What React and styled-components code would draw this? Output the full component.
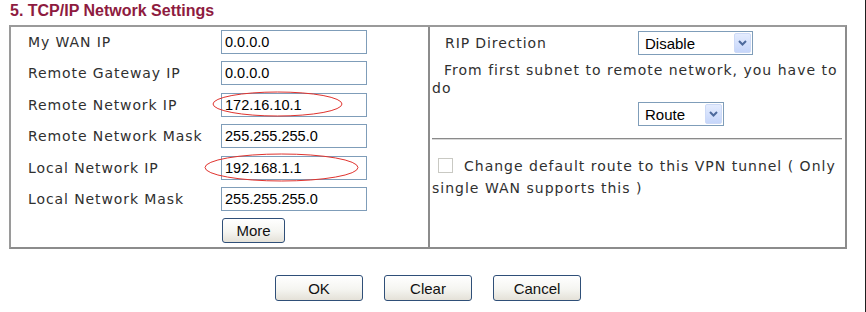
import { Fragment } from 'react';
import styled, { createGlobalStyle } from 'styled-components';

const GlobalStyle = createGlobalStyle`
  html, body {
    margin: 0;
    padding: 0;
    background: #fff;
  }
  body {
    font-family: "DejaVu Sans", Verdana, sans-serif;
  }
`;

const Page = styled.div`
  width: 866px;
  height: 312px;
  box-sizing: border-box;
  padding-left: 9px;
  border-right: 1px solid #1e1e1e;
`;

const Title = styled.h3`
  margin: 0;
  height: 25px;
  box-sizing: border-box;
  padding: 1px 0 0 1px;
  font: 700 16px/20px "Liberation Sans", Arial, sans-serif;
  color: #8e1b40;
`;

const Panel = styled.div`
  width: 838px;
  box-sizing: border-box;
  display: grid;
  grid-template-columns: 419px 1fr;
  border: 2px solid #8c8c8c;
  border-top-color: #9a9a9a;
  border-left-color: #9a9a9a;
`;

const LeftCell = styled.div`
  border-right: 2px solid #8c8c8c;
  padding: 3px 0 4px 17px;
  display: grid;
  grid-template-columns: 193px 146px;
  row-gap: 7.4px;
  align-items: center;
`;

const Label = styled.span`
  font-size: 14px;
  letter-spacing: 0.9px;
  color: #303030;
  white-space: nowrap;
`;

const Field = styled.div`
  position: relative;
  height: 24px;
`;

const TextInput = styled.input`
  width: 146px;
  height: 24px;
  box-sizing: border-box;
  margin: 0;
  padding: 0 3px;
  border: 1px solid #7f9db9;
  font: 14.5px "Liberation Sans", Arial, sans-serif;
  color: #000;
  background: #fff;
  outline: none;
`;

const Mark = styled.svg`
  position: absolute;
  left: ${p => p.$left}px;
  top: ${p => p.$top}px;
  overflow: visible;
  pointer-events: none;
`;

const Button = styled.button`
  width: ${p => p.$w}px;
  height: ${p => p.$h}px;
  margin: 0;
  padding: 0;
  box-sizing: border-box;
  border: 1px solid #2f4f78;
  border-radius: 3px;
  background: linear-gradient(#ffffff, #f5f5f1 55%, #e4e1d8);
  font: 15px "Liberation Sans", Arial, sans-serif;
  color: #111;
`;

const MoreSlot = styled.div`
  grid-column: 2;
  height: 25px;
  padding-left: 1px;
`;

const RightCell = styled.div`
  padding: 4px 5px 0 2px;
  display: flex;
  flex-direction: column;
  font-size: 14px;
  letter-spacing: 1px;
  color: #303030;
`;

const RipRow = styled.div`
  display: flex;
  align-items: center;
`;

const RipLabel = styled.span`
  width: 193px;
  padding-left: 13px;
  white-space: nowrap;
  letter-spacing: 0.9px;
`;

const Note = styled.p`
  margin: 6px 0 0;
  line-height: 18px;
  text-indent: 12px;
`;

const SelectBox = styled.div`
  display: inline-flex;
  align-items: stretch;
  width: ${p => p.$w}px;
  height: 24px;
  box-sizing: border-box;
  border: 1px solid #7f9db9;
  background: #fff;
  padding: 1px;
  margin-left: ${p => p.$indent || 0}px;
  margin-top: ${p => p.$top || 0}px;
`;

const SelectControl = styled.select`
  flex: 1;
  min-width: 0;
  appearance: none;
  border: none;
  background: transparent;
  padding: 0 0 0 5px;
  margin: 0;
  font: 15px "Liberation Sans", Arial, sans-serif;
  color: #000;
  outline: none;
`;

const ArrowButton = styled.span`
  width: 17px;
  display: flex;
  align-items: center;
  justify-content: center;
  border-radius: 2px;
  background: linear-gradient(#e4ecfe, #c6d6fa);
  border: 1px solid #cddaf7;
  box-sizing: border-box;
`;

const Rule = styled.hr`
  margin: 12px 0 0;
  border: none;
  border-top: 1px solid #8a8a8a;
  border-bottom: 1px solid #d8d8d8;
  width: 410px;
`;

const CheckNote = styled.p`
  margin: 15px 0 0;
  line-height: 22px;
`;

const Check = styled.input`
  appearance: none;
  width: 15px;
  height: 15px;
  margin: 0 11px -2px 6px;
  border: 1px solid #c9c9c3;
  background: #fff;
  vertical-align: baseline;
`;

const ButtonBar = styled.div`
  width: 838px;
  display: flex;
  justify-content: center;
  gap: 21px;
  margin-top: 26px;
`;

const Chevron = () => (
  <svg width="9" height="6" viewBox="0 0 9 6">
    <path d="M1 1 L4.5 4.5 L8 1" fill="none" stroke="#4d6a9c" strokeWidth="2" />
  </svg>
);

const Select = ({ width, value, options, indent, top }) => (
  <SelectBox $w={width} $indent={indent} $top={top}>
    <SelectControl defaultValue={value}>
      {options.map(o => (
        <option key={o}>{o}</option>
      ))}
    </SelectControl>
    <ArrowButton>
      <Chevron />
    </ArrowButton>
  </SelectBox>
);

const rows = [
  { label: 'My WAN IP', value: '0.0.0.0' },
  { label: 'Remote Gateway IP', value: '0.0.0.0' },
  { label: 'Remote Network IP', value: '172.16.10.1', mark: { left: -8, top: -1, w: 129, h: 24 } },
  { label: 'Remote Network Mask', value: '255.255.255.0' },
  { label: 'Local Network IP', value: '192.168.1.1', mark: { left: -16, top: -2, w: 153, h: 27 } },
  { label: 'Local Network Mask', value: '255.255.255.0' },
];

const App = () => {
  return (
    <Page>
      <GlobalStyle />
      <Title>5. TCP/IP Network Settings</Title>
      <Panel>
        <LeftCell>
          {rows.map(r => (
            <Fragment key={r.label}>
              <Label>{r.label}</Label>
              <Field>
                <TextInput defaultValue={r.value} />
                {r.mark && (
                  <Mark $left={r.mark.left} $top={r.mark.top} width={r.mark.w} height={r.mark.h}>
                    <ellipse
                      cx={r.mark.w / 2}
                      cy={r.mark.h / 2}
                      rx={r.mark.w / 2}
                      ry={r.mark.h / 2}
                      fill="none"
                      stroke="#e0332e"
                      strokeWidth="1"
                    />
                  </Mark>
                )}
              </Field>
            </Fragment>
          ))}
          <MoreSlot>
            <Button $w={63} $h={25}>More</Button>
          </MoreSlot>
        </LeftCell>
        <RightCell>
          <RipRow>
            <RipLabel>RIP Direction</RipLabel>
            <Select width={115} value="Disable" options={['Disable', 'TX', 'RX', 'Both']} />
          </RipRow>
          <Note>From first subnet to remote network, you have to do</Note>
          <div>
            <Select width={86} value="Route" options={['Route', 'NAT']} indent={206} top={5} />
          </div>
          <Rule />
          <CheckNote>
            <Check type="checkbox" disabled />
            Change default route to this VPN tunnel ( Only single WAN supports this )
          </CheckNote>
        </RightCell>
      </Panel>
      <ButtonBar>
        <Button $w={88} $h={26}>OK</Button>
        <Button $w={88} $h={26}>Clear</Button>
        <Button $w={88} $h={26}>Cancel</Button>
      </ButtonBar>
    </Page>
  );
};

export default App;
